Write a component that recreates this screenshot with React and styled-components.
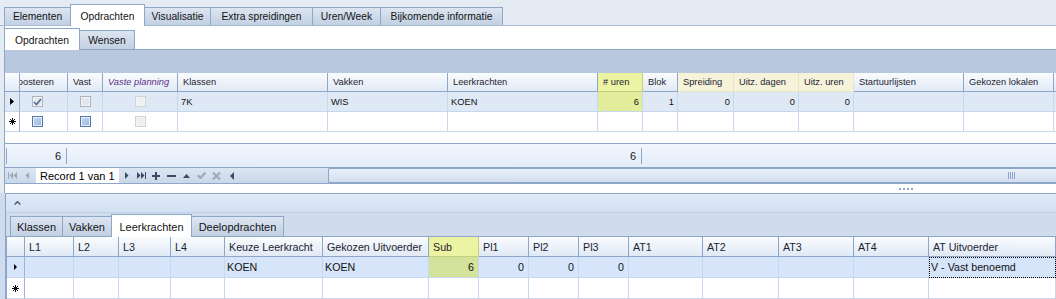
import React from 'react';
import styled, { createGlobalStyle, css } from 'styled-components';

const LINE = '#8ea6c8';
const GRID_LINE = '#c7d7ee';
const INK = '#1b1b1b';
const MUTED = '#9ca8b9';
const DARK_ICON = '#3c4b60';

const GlobalStyle = createGlobalStyle`
    html, body { margin: 0; padding: 0; }
    body {
        background: #e5ebf3;
        font-family: "Liberation Sans", Arial, sans-serif;
        color: ${INK};
    }
`

const Screen = styled.div`
    width: 1056px;
    height: 299px;
    overflow: hidden;
    display: flex;
    flex-direction: column;
    background: #e5ebf3;
`

/* ---------- tabs ---------- */

const MainTabStrip = styled.div`
    flex: none;
    height: 26px;
    box-sizing: border-box;
    display: flex;
    align-items: flex-end;
    padding-left: 4px;
    border-bottom: 1px solid #a9bad3;
`

const Tab = styled.div`
    flex: none;
    box-sizing: border-box;
    width: ${p => p.$w}px;
    height: ${p => p.$active ? p.$hi : p.$lo}px;
    margin: 0 -1px ${p => p.$active ? -1 : 0}px 0;
    padding-top: ${p => p.$active ? 1 : 0}px;
    position: relative;
    z-index: ${p => p.$active ? 1 : 0};
    display: flex;
    align-items: center;
    justify-content: center;
    border: 1px solid ${LINE};
    border-bottom: none;
    background: ${p => p.$active ? '#fff' : 'linear-gradient(#dce5f1, #c2d0e3)'};
    font-size: ${p => p.$size}px;
    white-space: nowrap;
    color: #141414;
`

const Workspace = styled.div`
    flex: 1;
    min-height: 0;
    display: flex;
    flex-direction: column;
    margin-left: 4px;
    border-left: 1px solid ${LINE};
    background: #fff;
`

const SubTabStrip = styled.div`
    flex: none;
    height: 23px;
    display: flex;
    align-items: flex-end;
    margin-left: -1px;
`

/* ---------- grid ---------- */

const GridBox = styled.div`
    flex: none;
    overflow: hidden;
    background: #fff;
    border-top: 1px solid ${LINE};
    font-size: ${p => p.$size}px;
    ${p => p.$detail && css`
        flex: 1;
        border-left: 1px solid ${LINE};
    `}
`

const GroupPanel = styled.div`
    height: 23px;
    background: #b8c9df;
`

const GridRow = styled.div`
    display: flex;
    height: ${p => p.$h}px;
`

const headBg = {
    plain: 'linear-gradient(#fafcfe, #e0e9f5)',
    yellow: '#ecf4a3',
    beige: '#f6f3da',
};
const headLine = {
    plain: LINE,
    yellow: '#c4ce7c',
    beige: '#e9e5c6',
};

const HeadCell = styled.div`
    flex: none;
    box-sizing: border-box;
    width: ${p => p.$w}px;
    height: 100%;
    display: flex;
    align-items: center;
    padding: 0 ${p => p.$pad}px;
    overflow: hidden;
    white-space: nowrap;
    background: ${p => headBg[p.$tone || 'plain']};
    border-right: 1px solid ${p => headLine[p.$tone || 'plain']};
    border-bottom: 1px solid ${p => headLine[p.$tone || 'plain']};
    font-style: ${p => p.$italic ? 'italic' : 'normal'};
    color: ${p => p.$italic ? '#5b2f86' : '#1c2330'};
`

const HeadLabel = styled.span`
    margin-left: ${p => -(p.$shift || 0)}px;
`

const cellBg = ({ $tone, $sel, $detail }) => {
    if ($sel && $tone === 'yellow') return $detail ? '#d4e39b' : '#e2ed9c';
    if ($sel) return $detail ? '#d6e5fa' : '#dfe8f5';
    return '#fff';
};

const Cell = styled.div`
    flex: none;
    box-sizing: border-box;
    width: ${p => p.$w}px;
    height: 100%;
    display: flex;
    align-items: center;
    justify-content: ${p => p.$align === 'right' ? 'flex-end' : p.$align === 'center' ? 'center' : 'flex-start'};
    padding: 0 ${p => p.$pad}px;
    overflow: hidden;
    white-space: nowrap;
    border-right: 1px solid ${GRID_LINE};
    border-bottom: 1px solid ${GRID_LINE};
    background: ${cellBg};
    color: #111;
    ${p => p.$focus && css`
        outline: 1px dotted #000;
        outline-offset: -1px;
    `}
`

const IndicatorCell = styled(Cell)`
    justify-content: center;
    padding: 0;
    border-right-color: #9fb3d1;
`

const Check = styled.span`
    box-sizing: border-box;
    width: 11px;
    height: 11px;
    display: inline-flex;
    align-items: center;
    justify-content: center;
    border: 1px solid ${p => p.$kind === 'active' ? '#5877a8' : p.$kind === 'faint' ? '#cfd3d8' : '#aeb4bc'};
    background: ${p => p.$kind === 'active' ? 'linear-gradient(135deg, #cadbf1, #97b6df)' : p.$kind === 'faint' ? '#eeeff1' : '#e3e6ea'};
    box-shadow: inset 0 0 0 1px ${p => p.$kind === 'active' ? '#e6eef9' : '#f3f4f6'};
`

/* ---------- footer + navigator ---------- */

const GridGap = styled.div`
    flex: 1;
`

const SummaryRow = styled.div`
    flex: none;
    height: 24px;
    box-sizing: border-box;
    border-top: 1px solid ${LINE};
    background: linear-gradient(#f1f6fd, #e3ecf8);
    display: flex;
    align-items: center;
    padding-left: 1px;
    font-size: 11px;
`

const SumCell = styled.div`
    flex: none;
    box-sizing: border-box;
    width: ${p => p.$w}px;
    height: 16px;
    display: flex;
    align-items: center;
    justify-content: flex-end;
    padding-right: 5px;
    border-right: 1px solid ${LINE};
    border-left: ${p => p.$first ? `1px solid ${LINE}` : 'none'};
    color: #1a1a1a;
`

const Navigator = styled.div`
    flex: none;
    height: 17px;
    box-sizing: border-box;
    border-top: 1px solid ${LINE};
    border-bottom: 1px solid ${LINE};
    background: linear-gradient(#dce6f3, #c8d7ea);
    display: flex;
`

const NavButton = styled.span`
    flex: none;
    width: ${p => p.$w}px;
    display: flex;
    align-items: center;
    justify-content: center;
    color: ${p => p.$off ? MUTED : DARK_ICON};
`

const RecordBox = styled.span`
    flex: none;
    width: 83px;
    margin-left: 2px;
    box-sizing: border-box;
    padding-left: 4px;
    display: flex;
    align-items: center;
    background: #fff;
    font-size: 11px;
    color: #000;
`

const ScrollTrack = styled.div`
    flex: 1;
    display: flex;
    padding-left: 88px;
`

const ScrollThumb = styled.div`
    flex: 1;
    display: flex;
    align-items: center;
    gap: 1px;
    padding-left: 679px;
    border: 1px solid #8fa5c6;
    border-right: none;
    border-radius: 2px 0 0 2px;
    background: linear-gradient(#eaf1fa, #d2dff0);
`

const GripLine = styled.span`
    width: 1px;
    height: 7px;
    background: ${LINE};
`

const Splitter = styled.div`
    flex: none;
    height: 9px;
    display: flex;
    align-items: center;
    gap: 2px;
    padding-left: 894px;
`

const SplitDot = styled.span`
    width: 2px;
    height: 2px;
    background: ${LINE};
`

/* ---------- detail panel ---------- */

const BottomDock = styled.div`
    flex: none;
    height: 106px;
    display: flex;
    padding-left: 5px;
    background: #cfdcee;
`

const BottomPanel = styled.div`
    flex: 1;
    display: flex;
    flex-direction: column;
    border-top: 1px solid ${LINE};
    border-left: 1px solid ${LINE};
    background: #d0dcec;
`

const PanelHeader = styled.div`
    flex: none;
    height: 18px;
    display: flex;
    align-items: center;
    padding-left: 8px;
    background: linear-gradient(#dfe9f7, #d3e1f4);
    color: #4b5567;
`

const DetailTabStrip = styled.div`
    flex: none;
    height: 24px;
    box-sizing: border-box;
    border-top: 1px solid #c1d0e4;
    display: flex;
    align-items: flex-end;
    padding-left: 4px;
`

/* ---------- data ---------- */

const mainTabs = [
    { label: 'Elementen', w: 67 },
    { label: 'Opdrachten', w: 75, active: true },
    { label: 'Visualisatie', w: 67 },
    { label: 'Extra spreidingen', w: 103 },
    { label: 'Uren/Week', w: 69 },
    { label: 'Bijkomende informatie', w: 123 },
];

const subTabs = [
    { label: 'Opdrachten', w: 76, active: true },
    { label: 'Wensen', w: 56 },
];

const detailTabs = [
    { label: 'Klassen', w: 53 },
    { label: 'Vakken', w: 50 },
    { label: 'Leerkrachten', w: 81, active: true },
    { label: 'Deelopdrachten', w: 93 },
];

const topColumns = [
    { key: 'inr', label: 'Inroosteren', w: 48, shift: 18, pad: 12 },
    { key: 'vast', label: 'Vast', w: 35, align: 'center' },
    { key: 'vp', label: 'Vaste planning', w: 75, align: 'center', italic: true },
    { key: 'klassen', label: 'Klassen', w: 150 },
    { key: 'vakken', label: 'Vakken', w: 120 },
    { key: 'lk', label: 'Leerkrachten', w: 150 },
    { key: 'uren', label: '# uren', w: 45, align: 'right', tone: 'yellow' },
    { key: 'blok', label: 'Blok', w: 35, align: 'right' },
    { key: 'spr', label: 'Spreiding', w: 56, align: 'right', tone: 'beige' },
    { key: 'ud', label: 'Uitz. dagen', w: 65, align: 'right', tone: 'beige' },
    { key: 'uu', label: 'Uitz. uren', w: 55, align: 'right', tone: 'beige' },
    { key: 'start', label: 'Startuurlijsten', w: 110 },
    { key: 'lok', label: 'Gekozen lokalen', w: 90 },
    { key: 'more', label: '', w: 90 },
];

const Tick = () => (
    <svg width="9" height="8" viewBox="0 0 9 8">
        <polyline points="1,4 3.5,6.5 8,1" fill="none" stroke="#4f6a98" strokeWidth="1.6" />
    </svg>
);

const topRows = [
    {
        sel: true, mark: 'pointer',
        cells: {
            inr: <Check $kind="locked"><Tick /></Check>,
            vast: <Check $kind="locked" />,
            vp: <Check $kind="faint" />,
            klassen: '7K', vakken: 'WIS', lk: 'KOEN',
            uren: '6', blok: '1', spr: '0', ud: '0', uu: '0',
        },
    },
    {
        sel: false, mark: 'new',
        cells: {
            inr: <Check $kind="active" />,
            vast: <Check $kind="active" />,
            vp: <Check $kind="faint" />,
        },
    },
];

const detailColumns = [
    { key: 'l1', label: 'L1', w: 49 },
    { key: 'l2', label: 'L2', w: 45 },
    { key: 'l3', label: 'L3', w: 52 },
    { key: 'l4', label: 'L4', w: 54 },
    { key: 'keuze', label: 'Keuze Leerkracht', w: 98 },
    { key: 'uitv', label: 'Gekozen Uitvoerder', w: 106 },
    { key: 'sub', label: 'Sub', w: 50, align: 'right', tone: 'yellow' },
    { key: 'pl1', label: 'Pl1', w: 50, align: 'right' },
    { key: 'pl2', label: 'Pl2', w: 50, align: 'right' },
    { key: 'pl3', label: 'Pl3', w: 50, align: 'right' },
    { key: 'at1', label: 'AT1', w: 74 },
    { key: 'at2', label: 'AT2', w: 76 },
    { key: 'at3', label: 'AT3', w: 75 },
    { key: 'at4', label: 'AT4', w: 75 },
    { key: 'atu', label: 'AT Uitvoerder', w: 127, focus: true },
];

const detailRows = [
    {
        sel: true, mark: 'pointer',
        cells: { keuze: 'KOEN', uitv: 'KOEN', sub: '6', pl1: '0', pl2: '0', pl3: '0', atu: 'V - Vast benoemd' },
    },
    { sel: false, mark: 'new', cells: {} },
];

/* ---------- icons ---------- */

const RowPointer = ({ small }) => (
    <svg width={small ? 3 : 4} height={small ? 6 : 7} viewBox="0 0 4 7" preserveAspectRatio="none">
        <polygon points="0,0 4,3.5 0,7" fill="#000" />
    </svg>
);

const NewRowMark = () => (
    <svg width="7" height="7" viewBox="0 0 7 7">
        <path d="M3.5 0V7M0 3.5H7M1 1L6 6M6 1L1 6" stroke="#111" strokeWidth="1" />
    </svg>
);

const RowMark = ({ mark, small }) => mark === 'pointer' ? <RowPointer small={small} /> : <NewRowMark />;

const FirstIcon = () => (
    <svg width="9" height="7" viewBox="0 0 9 7" fill="currentColor">
        <rect x="0" y="0" width="1" height="7" />
        <polygon points="5,0 1.5,3.5 5,7" />
        <polygon points="9,0 5.5,3.5 9,7" />
    </svg>
);
const PrevIcon = () => (
    <svg width="4" height="7" viewBox="0 0 4 7" fill="currentColor"><polygon points="4,0 0.5,3.5 4,7" /></svg>
);
const NextIcon = () => (
    <svg width="4" height="7" viewBox="0 0 4 7" fill="currentColor"><polygon points="0,0 3.5,3.5 0,7" /></svg>
);
const LastIcon = () => (
    <svg width="9" height="7" viewBox="0 0 9 7" fill="currentColor">
        <polygon points="0,0 3.5,3.5 0,7" />
        <polygon points="4,0 7.5,3.5 4,7" />
        <rect x="8" y="0" width="1" height="7" />
    </svg>
);
const PlusIcon = () => (
    <svg width="8" height="8" viewBox="0 0 8 8" fill="currentColor">
        <rect x="3" y="0" width="2" height="8" />
        <rect x="0" y="3" width="8" height="2" />
    </svg>
);
const MinusIcon = () => (
    <svg width="9" height="2" viewBox="0 0 9 2" fill="currentColor"><rect width="9" height="2" /></svg>
);
const UpIcon = () => (
    <svg width="7" height="4" viewBox="0 0 7 4" fill="currentColor"><polygon points="0,4 3.5,0 7,4" /></svg>
);
const CheckIcon = () => (
    <svg width="9" height="7" viewBox="0 0 9 7">
        <polyline points="0.7,3.3 3.4,6 8.4,0.6" fill="none" stroke="currentColor" strokeWidth="2" />
    </svg>
);
const CancelIcon = () => (
    <svg width="9" height="8" viewBox="0 0 9 8">
        <path d="M1 0.5L8 7.5M8 0.5L1 7.5" stroke="currentColor" strokeWidth="2" />
    </svg>
);
const ScrollLeftIcon = () => (
    <svg width="4" height="8" viewBox="0 0 4 8" fill="currentColor"><polygon points="4,0 0,4 4,8" /></svg>
);
const CollapseIcon = () => (
    <svg width="7" height="4" viewBox="0 0 7 4">
        <polyline points="0.6,3.5 3.5,0.7 6.4,3.5" fill="none" stroke="currentColor" strokeWidth="1.4" />
    </svg>
);

/* ---------- app ---------- */

export default class App extends React.Component {
    render() {
        return (
            <Screen>
                <GlobalStyle />

                <MainTabStrip>
                    {mainTabs.map(tab => (
                        <Tab key={tab.label} $w={tab.w} $active={tab.active} $hi={22} $lo={18} $size={10.3}>
                            {tab.label}
                        </Tab>
                    ))}
                </MainTabStrip>

                <Workspace>
                    <SubTabStrip>
                        {subTabs.map(tab => (
                            <Tab key={tab.label} $w={tab.w} $active={tab.active} $hi={22} $lo={19} $size={10.3}>
                                {tab.label}
                            </Tab>
                        ))}
                    </SubTabStrip>

                    <GridBox $size={9.3}>
                        <GroupPanel />
                        <GridRow $h={19}>
                            <HeadCell $w={15} $pad={0} />
                            {topColumns.map(col => (
                                <HeadCell key={col.key} $w={col.w} $pad={5} $tone={col.tone} $italic={col.italic}>
                                    <HeadLabel $shift={col.shift}>{col.label}</HeadLabel>
                                </HeadCell>
                            ))}
                        </GridRow>
                        {topRows.map((row, i) => (
                            <GridRow key={i} $h={20}>
                                <IndicatorCell $w={15} $sel={row.sel}>
                                    <RowMark mark={row.mark} />
                                </IndicatorCell>
                                {topColumns.map(col => (
                                    <Cell
                                        key={col.key}
                                        $w={col.w}
                                        $pad={col.pad || 3}
                                        $align={col.align}
                                        $tone={col.tone}
                                        $sel={row.sel}
                                    >
                                        {row.cells[col.key]}
                                    </Cell>
                                ))}
                            </GridRow>
                        ))}
                    </GridBox>

                    <GridGap />

                    <SummaryRow>
                        <SumCell $w={61} $first>6</SumCell>
                        <SumCell $w={575}>6</SumCell>
                    </SummaryRow>

                    <Navigator>
                        <NavButton $w={15} $off><FirstIcon /></NavButton>
                        <NavButton $w={14} $off><PrevIcon /></NavButton>
                        <RecordBox>Record 1 van 1</RecordBox>
                        <NavButton $w={15}><NextIcon /></NavButton>
                        <NavButton $w={14}><LastIcon /></NavButton>
                        <NavButton $w={16}><PlusIcon /></NavButton>
                        <NavButton $w={15}><MinusIcon /></NavButton>
                        <NavButton $w={15}><UpIcon /></NavButton>
                        <NavButton $w={14} $off><CheckIcon /></NavButton>
                        <NavButton $w={16} $off><CancelIcon /></NavButton>
                        <NavButton $w={16}><ScrollLeftIcon /></NavButton>
                        <ScrollTrack>
                            <ScrollThumb>
                                <GripLine /><GripLine /><GripLine /><GripLine />
                            </ScrollThumb>
                        </ScrollTrack>
                    </Navigator>

                    <Splitter>
                        <SplitDot /><SplitDot /><SplitDot /><SplitDot />
                    </Splitter>
                </Workspace>

                <BottomDock>
                    <BottomPanel>
                        <PanelHeader>
                            <CollapseIcon />
                        </PanelHeader>
                        <DetailTabStrip>
                            {detailTabs.map(tab => (
                                <Tab key={tab.label} $w={tab.w} $active={tab.active} $hi={23} $lo={20} $size={11}>
                                    {tab.label}
                                </Tab>
                            ))}
                        </DetailTabStrip>
                        <GridBox $size={10.7} $detail>
                            <GridRow $h={20}>
                                <HeadCell $w={18} $pad={0} />
                                {detailColumns.map(col => (
                                    <HeadCell key={col.key} $w={col.w} $pad={4} $tone={col.tone}>
                                        {col.label}
                                    </HeadCell>
                                ))}
                            </GridRow>
                            {detailRows.map((row, i) => (
                                <GridRow key={i} $h={21}>
                                    <IndicatorCell $w={18} $sel={row.sel} $detail>
                                        <RowMark mark={row.mark} small />
                                    </IndicatorCell>
                                    {detailColumns.map(col => (
                                        <Cell
                                            key={col.key}
                                            $w={col.w}
                                            $pad={col.align === 'right' ? 4 : 2}
                                            $align={col.align}
                                            $tone={col.tone}
                                            $sel={row.sel}
                                            $detail
                                            $focus={row.sel && col.focus}
                                        >
                                            {row.cells[col.key]}
                                        </Cell>
                                    ))}
                                </GridRow>
                            ))}
                        </GridBox>
                    </BottomPanel>
                </BottomDock>
            </Screen>
        );
    }
}
